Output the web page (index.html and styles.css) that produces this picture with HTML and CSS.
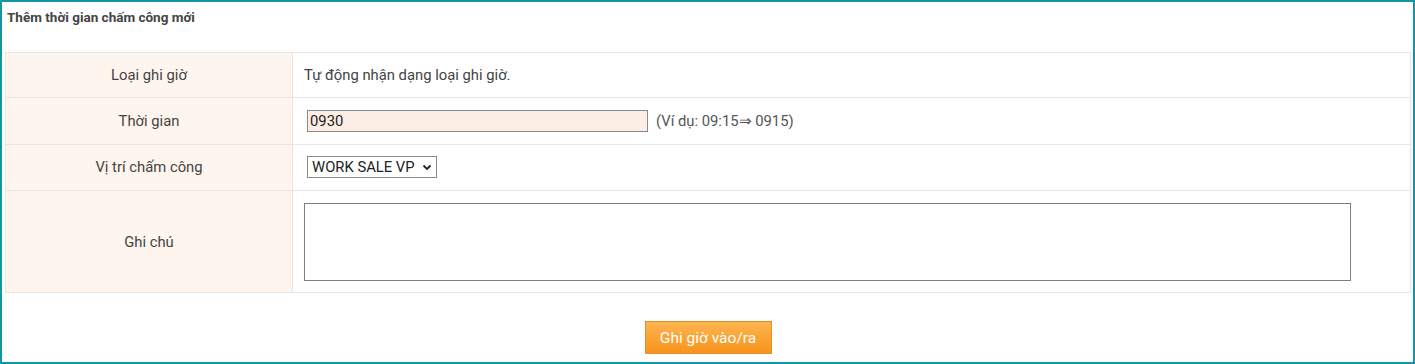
FILE: index.html
```html
<!DOCTYPE html>
<html lang="vi">
<head>
<meta charset="utf-8">
<title>Thêm thời gian chấm công mới</title>
<link rel="stylesheet" href="styles.css">
</head>
<body>
<div class="frame">
  <div class="title">Thêm thời gian chấm công mới</div>
  <div class="form-grid">
    <div class="label r1">Loại ghi giờ</div>
    <div class="value r1">Tự động nhận dạng loại ghi giờ.</div>

    <div class="label r2">Thời gian</div>
    <div class="value r2">
      <input class="time-input" type="text" value="0930">
      <span class="hint">(Ví dụ: 09:15⇒ 0915)</span>
    </div>

    <div class="label r3">Vị trí chấm công</div>
    <div class="value r3">
      <select class="place-select">
        <option>WORK SALE VP</option>
      </select>
    </div>

    <div class="label r4">Ghi chú</div>
    <div class="value r4">
      <textarea class="note"></textarea>
    </div>
  </div>
  <div class="actions">
    <button class="submit" type="button">Ghi giờ vào/ra</button>
  </div>
</div>
</body>
</html>
```

FILE: styles.css
```css
* { box-sizing: border-box; }
html, body { margin: 0; padding: 0; background: #fff; }
body {
  font-family: Roboto, "Noto Sans", "Liberation Sans", sans-serif;
  font-size: 14.8px;
  color: #444;
}
.frame {
  width: 1415px;
  height: 364px;
  border: 2px solid #1195a9;
  padding: 7px 2px 0 3px;
}
.title {
  font-size: 13.5px;
  font-weight: bold;
  line-height: 16px;
  color: #444;
  padding-left: 2px;
}
.form-grid {
  margin-top: 27px;
  display: grid;
  grid-template-columns: 287px 1fr;
  border-top: 1px solid #e8e6e4;
  border-left: 1px solid #e8e6e4;
}
.label, .value {
  border-right: 1px solid #e8e6e4;
  border-bottom: 1px solid #e8e6e4;
  display: flex;
  align-items: center;
}
.label {
  background: #fef5ee;
  justify-content: center;
  color: #444;
}
.value {
  padding-left: 11px;
  background: #fff;
}
.r1 { height: 45px; }
.r2 { height: 47px; }
.r3 { height: 46px; padding-bottom: 2px; }
.r4 { height: 102px; }
.time-input {
  margin-left: 3px;
  width: 341px;
  height: 22px;
  border: 1px solid #8a8a8a;
  background: #fdeee5;
  font-family: Roboto, "Noto Sans", sans-serif;
  font-size: 14.8px;
  color: #222;
  padding: 0 2px;
  outline: none;
}
.hint {
  margin-left: 8px;
  color: #555;
}
.place-select {
  margin-left: 3px;
  width: 130px;
  height: 22px;
  border: 1px solid #8a8a8a;
  border-radius: 0;
  background: #fff url("data:image/svg+xml;utf8,<svg xmlns='http://www.w3.org/2000/svg' width='10' height='8' viewBox='0 0 10 8'><path d='M1.5 2.5 L5 6 L8.5 2.5' fill='none' stroke='%23222' stroke-width='1.8'/></svg>") no-repeat right 4px center;
  -webkit-appearance: none;
  appearance: none;
  font-family: Roboto, "Noto Sans", sans-serif;
  font-size: 14.8px;
  color: #222;
  padding: 0 0 0 4px;
}
.note {
  width: 1047px;
  height: 78px;
  border: 1px solid #808080;
  resize: none;
  font-family: Roboto, sans-serif;
}
.actions {
  display: flex;
  justify-content: center;
  margin-top: 28px;
}
.submit {
  width: 127px;
  height: 33px;
  border: 1px solid #e2902a;
  background: linear-gradient(#fdb450, #f7941c);
  color: #fff;
  font-family: Roboto, "Noto Sans", sans-serif;
  font-size: 15.5px;
  padding: 0;
  cursor: pointer;
}
```
